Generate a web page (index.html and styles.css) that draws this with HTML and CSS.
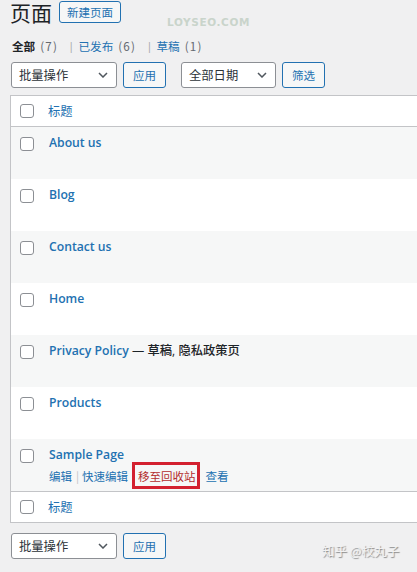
FILE: index.html
```html
<!DOCTYPE html>
<html lang="zh-CN">
<head>
<meta charset="utf-8">
<title>页面</title>
<link rel="stylesheet" href="styles.css">
</head>
<body>
<div class="wrap">
  <div class="head">
    <h1 class="title">页面</h1>
    <a class="add-new">新建页面</a>
  </div>
  <ul class="subsub">
    <li class="item current">全部<span class="count">(7)</span></li>
    <li class="sep">|</li>
    <li class="item"><a>已发布</a><span class="count">(6)</span></li>
    <li class="sep">|</li>
    <li class="item"><a>草稿</a><span class="count">(1)</span></li>
  </ul>
  <div class="tablenav">
    <div class="select bulk">批量操作<svg class="chev" viewBox="0 0 10 6" width="10" height="6"><path d="M1 1l4 4 4-4" fill="none" stroke="#50575e" stroke-width="1.5"/></svg></div>
    <button class="btn">应用</button>
    <div class="select date">全部日期<svg class="chev" viewBox="0 0 10 6" width="10" height="6"><path d="M1 1l4 4 4-4" fill="none" stroke="#50575e" stroke-width="1.5"/></svg></div>
    <button class="btn">筛选</button>
  </div>
  <div class="list">
    <div class="row head-row top"><span class="cb"></span><a class="col-title">标题</a></div>
    <div class="row alt"><span class="cb"></span><div class="cell"><a class="row-title">About us</a></div></div>
    <div class="row"><span class="cb"></span><div class="cell"><a class="row-title">Blog</a></div></div>
    <div class="row alt"><span class="cb"></span><div class="cell"><a class="row-title">Contact us</a></div></div>
    <div class="row"><span class="cb"></span><div class="cell"><a class="row-title">Home</a></div></div>
    <div class="row alt"><span class="cb"></span><div class="cell"><a class="row-title">Privacy Policy</a><span class="state"> — 草稿, 隐私政策页</span></div></div>
    <div class="row"><span class="cb"></span><div class="cell"><a class="row-title">Products</a></div></div>
    <div class="row alt"><span class="cb"></span><div class="cell"><a class="row-title">Sample Page</a>
      <div class="actions"><a>编辑</a><span class="asep">|</span><a>快速编辑</a><a class="trash">移至回收站</a><a class="view">查看</a></div>
    </div></div>
    <div class="row head-row bottom"><span class="cb"></span><a class="col-title">标题</a></div>
  </div>
  <div class="tablenav lower">
    <div class="select bulk">批量操作<svg class="chev" viewBox="0 0 10 6" width="10" height="6"><path d="M1 1l4 4 4-4" fill="none" stroke="#50575e" stroke-width="1.5"/></svg></div>
    <button class="btn">应用</button>
  </div>
</div>
<div class="wm-site">LOYSEO.COM</div>
<div class="wm-zhihu">知乎 @校丸子</div>
</body>
</html>
```
FILE: styles.css
```css
html, body {
  margin: 0;
  padding: 0;
  background: #f0f0f1;
  overflow: hidden;
  height: 572px;
}
body {
  font-family: "Open Sans", "Noto Sans CJK SC", sans-serif;
  color: #1d2327;
  font-size: 11.5px;
  position: relative;
}
a { color: #2271b1; text-decoration: none; }
.wrap {
  padding-left: 10px;
}
.head {
  display: flex;
  align-items: flex-start;
  height: 24px;
}
.title {
  margin: 0;
  font-weight: 400;
  font-size: 21px;
  line-height: 24px;
  font-family: "Noto Sans CJK SC", sans-serif;
  color: #1d2327;
}
.add-new {
  margin-left: 7px;
  margin-top: 1px;
  height: 20px;
  line-height: 20px;
  padding: 0 7px;
  border: 1px solid #2271b1;
  border-radius: 3px;
  background: #f6f7f7;
  font-size: 11.5px;
  font-family: "Noto Sans CJK SC", sans-serif;
}
.subsub {
  list-style: none;
  margin: 14px 0 0 2px;
  padding: 0;
  display: flex;
  align-items: center;
  height: 16px;
  line-height: 16px;
  font-size: 11.6px;
}
.item.current { font-weight: 700; }
.count {
  color: #646970;
  font-weight: 400;
  margin-left: 5px;
  letter-spacing: 1.2px;
  font-family: "Noto Sans CJK SC", sans-serif;
}
.sep {
  color: #a7aaad;
  margin: 0 4px 0 10px;
}
.tablenav {
  display: flex;
  align-items: center;
  margin-top: 8px;
  margin-left: 1px;
  height: 26px;
}
.select {
  box-sizing: border-box;
  height: 26px;
  border: 1px solid #8c8f94;
  border-radius: 3px;
  background: #fff;
  display: flex;
  align-items: center;
  justify-content: space-between;
  padding: 0 8px 0 7px;
  font-size: 12.3px;
  color: #2c3338;
  font-family: "Noto Sans CJK SC", sans-serif;
}
.select.bulk { width: 106px; }
.select.date { width: 95px; margin-left: 15px; }
.chev { display: block; }
.btn {
  box-sizing: border-box;
  height: 26px;
  width: 43px;
  margin-left: 6px;
  border: 1px solid #2271b1;
  border-radius: 3px;
  background: #f6f7f7;
  color: #2271b1;
  font-size: 11.5px;
  font-family: "Noto Sans CJK SC", sans-serif;
  padding: 0;
}
.list {
  margin-top: 7px;
  margin-right: -6px;
  border: 1px solid #c3c4c7;
  background: #fff;
}
.row {
  display: flex;
  align-items: flex-start;
  height: 52px;
  box-sizing: border-box;
}
.row.alt { background: #f6f7f7; }
.cb {
  box-sizing: border-box;
  width: 14px;
  height: 14px;
  border: 1px solid #8c8f94;
  border-radius: 3px;
  background: #fff;
  margin: 10px 0 0 9px;
  flex: none;
}
.cell {
  margin-left: 15px;
  padding-top: 8px;
}
.row-title {
  font-weight: 600;
  font-size: 12.2px;
  line-height: 16px;
}
.state {
  font-weight: 500;
  font-size: 12.3px;
  line-height: 16px;
  color: #1d2327;
}
.head-row {
  height: 31px;
  align-items: center;
}
.head-row .cb { margin-top: 0; }
.head-row.top { border-bottom: 1px solid #c3c4c7; }
.head-row.bottom { border-top: 1px solid #c3c4c7; height: 31px; }
.col-title {
  margin-left: 14px;
  font-size: 12.3px;
  font-family: "Noto Sans CJK SC", sans-serif;
}
.actions {
  margin-top: 4px;
  display: flex;
  align-items: center;
  height: 18px;
  font-size: 11.5px;
  font-family: "Noto Sans CJK SC", sans-serif;
}
.asep { color: #c3c4c7; margin: 0 3px 0 4px; }
.trash {
  color: #b32d2e;
  margin-left: 10px;
  position: relative;
}
.trash::after {
  content: "";
  position: absolute;
  left: -6px;
  right: -4px;
  top: -6px;
  bottom: -5px;
  border: 3px solid #d3202f;
}
.view { margin-left: 10px; }
.tablenav.lower { margin-top: 10px; }
.wm-site {
  position: absolute;
  left: 167px;
  top: 16px;
  font-family: "DejaVu Sans", sans-serif;
  font-weight: 700;
  font-size: 10.5px;
  letter-spacing: 0.6px;
  color: #c9d4cb;
}
.wm-zhihu {
  position: absolute;
  left: 322px;
  top: 541px;
  font-family: "Noto Sans CJK SC", sans-serif;
  font-size: 12.5px;
  color: #f2f2f2;
  text-shadow: 1px 1px 1px #8a8a8a;
}
```
